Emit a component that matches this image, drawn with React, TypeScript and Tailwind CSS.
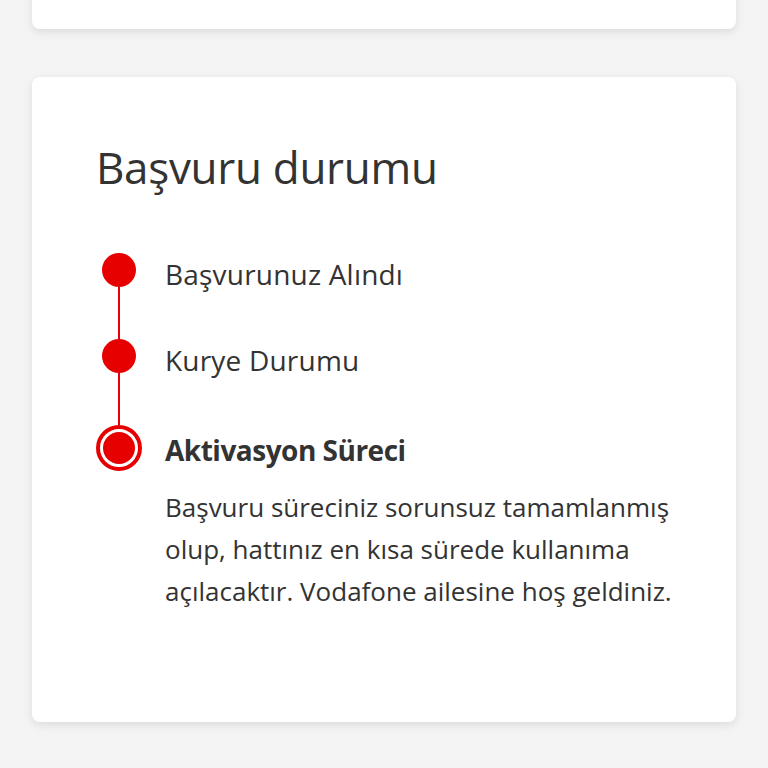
import React from 'react';

const steps = [
  { label: 'Başvurunuz Alındı', done: true },
  { label: 'Kurye Durumu', done: true },
];

function Dot() {
  return <div className="h-[34px] w-[34px] shrink-0 rounded-full bg-[#e60000]" />;
}

export default function App() {
  return (
    <div className="min-h-[768px] overflow-hidden bg-[#f4f4f4] px-[32px] pb-10" style={{ fontFamily: '"Open Sans", sans-serif' }}>
      {/* previous card, mostly scrolled away */}
      <div className="-mt-[40px] rounded-lg bg-white px-[64px] pb-[22px] shadow-[0_3px_10px_rgba(0,0,0,0.10)]">
        <p className="text-[24px] leading-[47px] text-[#333]">Kadıköy, İstanbul, 34710 Türkiye</p>
      </div>

      <div className="mt-[48px] rounded-lg bg-white pt-[54px] pb-[110px] pl-[64px] pr-[40px] shadow-[0_3px_10px_rgba(0,0,0,0.10)]">
        <h2 className="text-[44px] leading-[72px] tracking-[-0.3px] text-[#333]">Başvuru durumu</h2>

        <div className="mt-[50px]">
          {steps.map((s) => (
            <div key={s.label} className="flex">
              <div className="flex w-[46px] flex-col items-center">
                <Dot />
                <div className="h-[52px] w-[2px] bg-[#e60000]" />
              </div>
              <div className="ml-[23px] pt-[2px] text-[28px] leading-[38px] tracking-[0.2px] text-[#333]">{s.label}</div>
            </div>
          ))}

          <div className="flex">
            <div className="flex w-[46px] flex-col items-center">
              <div className="flex h-[46px] w-[46px] items-center justify-center rounded-full border-[4px] border-[#e60000] bg-white">
                <div className="h-[32px] w-[32px] rounded-full bg-[#e60000]" />
              </div>
            </div>
            <div className="ml-[23px]">
              <div className="pt-[3px] text-[28px] font-bold leading-[44px] tracking-[-0.5px] text-[#333]">Aktivasyon Süreci</div>
              <p className="mt-[14px] w-[525px] text-[26px] leading-[42px] text-[#333]">
                Başvuru süreciniz sorunsuz tamamlanmış olup, hattınız en kısa sürede kullanıma açılacaktır. Vodafone ailesine hoş geldiniz.
              </p>
            </div>
          </div>
        </div>
      </div>
    </div>
  );
}
